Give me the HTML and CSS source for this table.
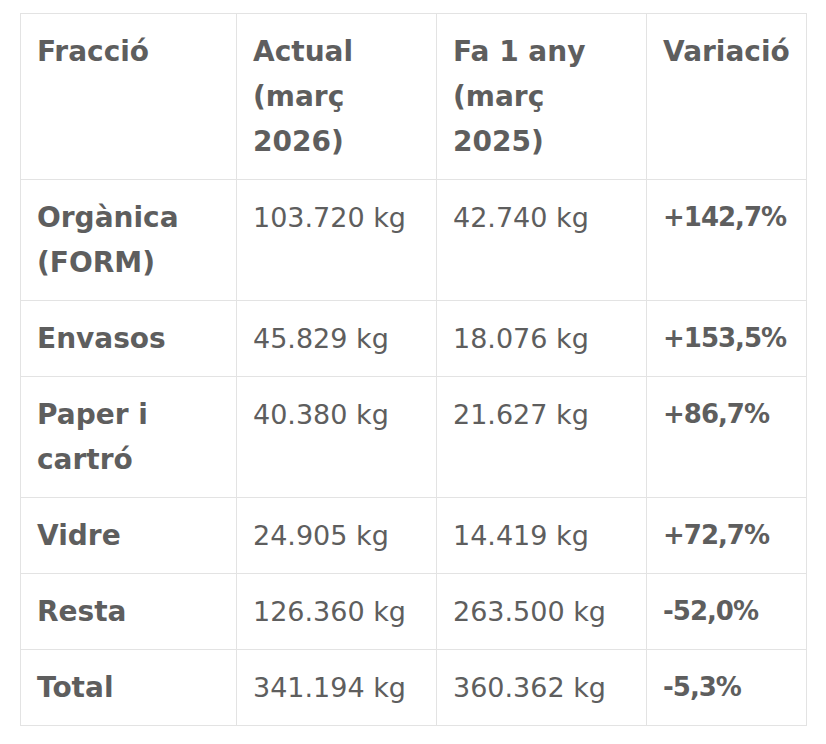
FILE: index.html
```html
<!DOCTYPE html>
<html lang="ca">
<head>
<meta charset="utf-8">
<title>Fraccions</title>
<link rel="stylesheet" href="styles.css">
</head>
<body>
<div class="wrap">
<table class="data">
<colgroup>
<col class="c1"><col class="c2"><col class="c3"><col class="c4">
</colgroup>
<thead>
<tr><th>Fracció</th><th>Actual (març 2026)</th><th>Fa 1 any (març 2025)</th><th>Variació</th></tr>
</thead>
<tbody>
<tr><td class="lbl">Orgànica (FORM)</td><td>103.720 kg</td><td>42.740 kg</td><td class="var">+142,7%</td></tr>
<tr><td class="lbl">Envasos</td><td>45.829 kg</td><td>18.076 kg</td><td class="var">+153,5%</td></tr>
<tr><td class="lbl">Paper i cartró</td><td>40.380 kg</td><td>21.627 kg</td><td class="var">+86,7%</td></tr>
<tr><td class="lbl">Vidre</td><td>24.905 kg</td><td>14.419 kg</td><td class="var">+72,7%</td></tr>
<tr><td class="lbl">Resta</td><td>126.360 kg</td><td>263.500 kg</td><td class="var">-52,0%</td></tr>
<tr><td class="lbl">Total</td><td>341.194 kg</td><td>360.362 kg</td><td class="var">-5,3%</td></tr>
</tbody>
</table>
</div>
</body>
</html>
```
FILE: styles.css
```css
html, body {
  margin: 0;
  background: #ffffff;
}
.wrap {
  padding: 13px 20px;
}
.data {
  border-collapse: collapse;
  table-layout: fixed;
  width: 786px;
  font-family: "DejaVu Sans", sans-serif;
  font-size: 28px;
  line-height: 45px;
  color: #5e5e5e;
}
.c1 { width: 216px; }
.c2 { width: 200px; }
.c3 { width: 210px; }
.c4 { width: 160px; }
.data th, .data td {
  border: 1px solid #e3e3e3;
  padding: 15px 16px;
  text-align: left;
  vertical-align: top;
}
.data th {
  font-weight: 700;
}
.data td {
  font-weight: 400;
  font-size: 27px;
}
.data td.lbl {
  font-weight: 700;
  font-size: 28px;
}
.data td.var {
  font-weight: 700;
  font-size: 26px;
  letter-spacing: -1px;
}
```
